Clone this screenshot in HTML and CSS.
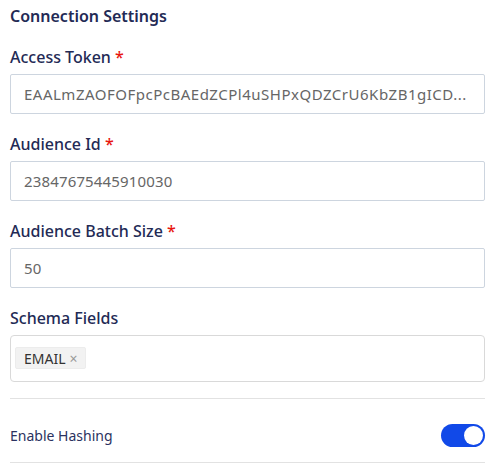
FILE: index.html
```html
<!DOCTYPE html>
<html>
<head>
<meta charset="utf-8">
<link rel="stylesheet" href="styles.css">
</head>
<body>
<div class="panel">
  <h2 class="title">Connection Settings</h2>
  <div class="field">
    <label class="label">Access Token <span class="req">*</span></label>
    <div class="input input-token">EAALmZAOFOFpcPcBAEdZCPl4uSHPxQDZCrU6KbZB1gICD...</div>
  </div>
  <div class="field">
    <label class="label">Audience Id <span class="req">*</span></label>
    <div class="input">23847675445910030</div>
  </div>
  <div class="field">
    <label class="label">Audience Batch Size <span class="req">*</span></label>
    <div class="input">50</div>
  </div>
  <div class="field">
    <label class="label">Schema Fields</label>
    <div class="tags">
      <span class="tag">EMAIL <span class="x">×</span></span>
    </div>
  </div>
  <div class="row">
    <span class="row-label">Enable Hashing</span>
    <span class="toggle"><span class="knob"></span></span>
  </div>
</div>
</body>
</html>
```
FILE: styles.css
```css
html, body { margin: 0; padding: 0; background: #fff; }
body { font-family: "Noto Sans", "Open Sans", sans-serif; color: #232a55; }
.panel { padding: 4px 7px 0 10px; }
.title { margin: 0; font-size: 16px; font-weight: 600; line-height: 24px; color: #232a55; }
.field { margin-top: 19px; }
.title + .field { margin-top: 18px; }
.label { display: block; font-size: 16px; font-weight: 500; line-height: 22px; color: #232a55; margin-bottom: 6px; }
.req { color: #e8170f; }
.input { box-sizing: border-box; height: 40px; border: 1px solid #cdd5df; border-radius: 2px; padding: 0 13px; font-size: 15px; line-height: 38px; color: #666; white-space: nowrap; letter-spacing: 0.15px; }
.input-token { letter-spacing: 0.5px; }
.tags { box-sizing: border-box; height: 47px; border: 1px solid #d9d9d9; border-radius: 4px; padding: 11px 4px; display: flex; align-items: flex-start; }
.tag { display: inline-flex; align-items: center; height: 22px; box-sizing: border-box; background: #f2f2f2; border: 1px solid #ececec; border-radius: 2px; padding: 0 7px 0 8px; font-size: 14px; color: #333; gap: 4px; }
.x { color: #999; font-size: 14px; }
.row { margin-top: 16px; border-top: 1px solid #e2e2e2; border-bottom: 1px solid #e2e2e2; height: 65px; padding-top: 10px; box-sizing: border-box; display: flex; align-items: center; justify-content: space-between; }
.row-label { font-size: 14px; color: #2b3260; }
.toggle { width: 44px; height: 23px; border-radius: 12px; background: #1149e8; position: relative; }
.knob { position: absolute; right: 2px; top: 2px; width: 19px; height: 19px; border-radius: 50%; background: #fff; }
```
